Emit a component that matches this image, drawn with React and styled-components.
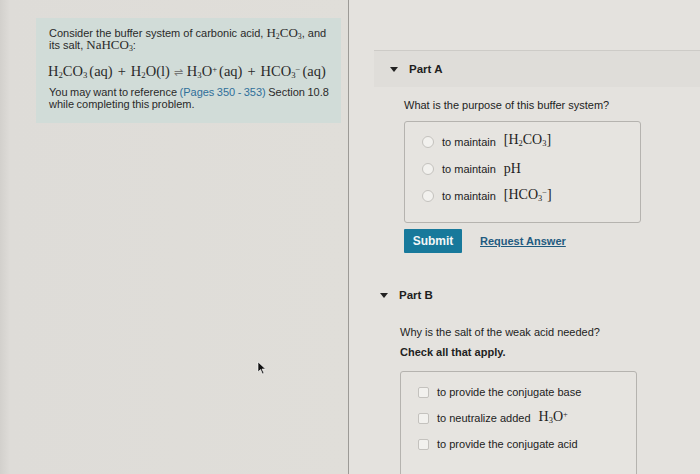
import React from "react";
import styled, { createGlobalStyle } from "styled-components";

const GlobalStyle = createGlobalStyle`
  html, body {
    margin: 0;
    padding: 0;
    width: 700px;
    height: 474px;
    overflow: hidden;
    background: #e1dfdb;
    font-family: "Liberation Sans", Arial, sans-serif;
    color: #2b2b2b;
  }
`;

const Page = styled.div`
  position: relative;
  display: flex;
  width: 700px;
  height: 474px;
`;

const LeftPane = styled.div`
  width: 349px;
  flex-shrink: 0;
  padding: 18px 0 0 36px;
  box-sizing: border-box;
  border-right: 1px solid #9c9a96;
  background: linear-gradient(90deg, #d2d0cc 0px, #dedcd8 10px, #e0ded9 100%);
`;

const InfoBox = styled.div`
  width: 305px;
  height: 105px;
  box-sizing: border-box;
  padding: 9px 4px 0 13px;
  background: #d1dcd8;
  font-size: 11px;
  line-height: 12px;
  color: #2a2a2a;
`;

const Para = styled.p`
  margin: 0 0 ${(p) => p.gap || 0}px 0;
  word-spacing: ${(p) => p.tight || 0}px;
`;

const Equation = styled.div`
  display: flex;
  align-items: baseline;
  font-family: "Liberation Serif", "Times New Roman", serif;
  font-size: 14.5px;
  line-height: 16px;
  margin: 0 0 6px -1px;
  white-space: nowrap;
`;

const Op = styled.span`
  margin: 0 ${(p) => p.space || 5}px;
  color: ${(p) => p.color || "inherit"};
  font-size: ${(p) => p.size || 14.5}px;
`;

const Math = styled.span`
  font-family: "Liberation Serif", "Times New Roman", serif;
  font-size: ${(p) => p.size || 13}px;
  line-height: 0;
`;

const Sub = styled.sub`
  font-size: 0.6em;
  line-height: 0;
  vertical-align: -0.25em;
`;

const Sup = styled.sup`
  font-size: 0.6em;
  line-height: 0;
  vertical-align: 0.5em;
`;

const Phase = styled.span`
  margin-left: 2px;
`;

const RefLink = styled.span`
  color: #2f6f9a;
`;

const RightPane = styled.div`
  flex: 1;
  padding-top: 50px;
  background: #e4e2de;
`;

const Section = styled.section`
  border-top: ${(p) => (p.divider ? "1px solid #cdcbc7" : "none")};
  margin-left: ${(p) => (p.divider ? 25 : 0)}px;
`;

const PartHeader = styled.div`
  display: flex;
  align-items: center;
  gap: 11px;
  height: 36px;
  padding-left: ${(p) => p.indent}px;
  font-size: 11.5px;
  font-weight: bold;
  color: #1e1e1e;
  background: ${(p) => (p.shaded ? "#dfddd9" : "transparent")};
`;

const Caret = styled.span`
  width: 0;
  height: 0;
  border-left: 4px solid transparent;
  border-right: 4px solid transparent;
  border-top: 5px solid #222;
`;

const Body = styled.div`
  padding-left: ${(p) => p.indent}px;
`;

const Question = styled.div`
  font-size: 11px;
  line-height: 12px;
  margin-top: ${(p) => p.top}px;
  font-weight: ${(p) => (p.bold ? "bold" : "normal")};
  color: #222;
`;

const OptionBox = styled.div`
  width: 237px;
  box-sizing: border-box;
  height: ${(p) => p.height}px;
  margin-top: ${(p) => p.top}px;
  padding: ${(p) => p.padTop}px 0 0 17px;
  border: 1px solid #b5b3af;
  border-radius: 3px;
  background: #e6e4e0;
  display: flex;
  flex-direction: column;
  gap: ${(p) => p.gap}px;
`;

const Option = styled.label`
  display: flex;
  align-items: center;
  gap: 8px;
  height: 16px;
  font-size: 11px;
  color: #222;
`;

const Radio = styled.span`
  width: 10px;
  height: 10px;
  border-radius: 50%;
  border: 1px solid #c4c2be;
  background: #f2f1ee;
  flex-shrink: 0;
`;

const Check = styled.span`
  width: 9px;
  height: 9px;
  border-radius: 2px;
  border: 1px solid #c4c2be;
  background: #f2f1ee;
  flex-shrink: 0;
`;

const Actions = styled.div`
  display: flex;
  align-items: center;
  gap: 18px;
  margin-top: 6px;
`;

const SubmitButton = styled.button`
  width: 58px;
  height: 24px;
  border: none;
  border-radius: 1px;
  background: #17799b;
  color: #f3f6f7;
  font-family: "Liberation Sans", Arial, sans-serif;
  font-size: 12px;
  font-weight: bold;
  padding: 0;
`;

const RequestLink = styled.a`
  font-size: 11px;
  font-weight: bold;
  color: #1f5b80;
  text-decoration: underline;
`;

const Cursor = styled.svg`
  position: absolute;
  left: 257px;
  top: 361px;
`;

const App = () => {
  return (
    <Page>
      <GlobalStyle />
      <LeftPane>
        <InfoBox>
          <Para gap={12}>
            Consider the buffer system of carbonic acid,{" "}
            <Math>
              H<Sub>2</Sub>CO<Sub>3</Sub>
            </Math>
            , and its salt,{" "}
            <Math>
              NaHCO<Sub>3</Sub>
            </Math>
            :
          </Para>
          <Equation>
            <span>
              H<Sub>2</Sub>CO<Sub>3</Sub>
              <Phase>(aq)</Phase>
            </span>
            <Op>+</Op>
            <span>
              H<Sub>2</Sub>O(l)
            </span>
            <Op space={4} color="#777" size={11}>
              ⇌
            </Op>
            <span>
              H<Sub>3</Sub>O<Sup>+</Sup>
              <Phase>(aq)</Phase>
            </span>
            <Op>+</Op>
            <span>
              HCO<Sub>3</Sub>
              <Sup>−</Sup>
              <Phase>(aq)</Phase>
            </span>
          </Equation>
          <Para tight={-0.6}>
            You may want to reference <RefLink>(Pages 350 - 353)</RefLink>{" "}
            Section 10.8 while completing this problem.
          </Para>
        </InfoBox>
      </LeftPane>

      <RightPane>
        <Section divider>
          <PartHeader indent={16} shaded>
            <Caret />
            Part A
          </PartHeader>
          <Body indent={30}>
            <Question top={12}>What is the purpose of this buffer system?</Question>
            <OptionBox top={10} height={102} padTop={12} gap={11}>
              <Option>
                <Radio />
                to maintain{" "}
                <Math size={14}>
                  [H<Sub>2</Sub>CO<Sub>3</Sub>]
                </Math>
              </Option>
              <Option>
                <Radio />
                to maintain <Math size={14}>pH</Math>
              </Option>
              <Option>
                <Radio />
                to maintain{" "}
                <Math size={14}>
                  [HCO<Sub>3</Sub>
                  <Sup>−</Sup>]
                </Math>
              </Option>
            </OptionBox>
            <Actions>
              <SubmitButton>Submit</SubmitButton>
              <RequestLink>Request Answer</RequestLink>
            </Actions>
          </Body>
        </Section>

        <Section>
          <PartHeader indent={31} style={{ marginTop: 24 }}>
            <Caret />
            Part B
          </PartHeader>
          <Body indent={51}>
            <Question top={13}>Why is the salt of the weak acid needed?</Question>
            <Question top={8} bold>
              Check all that apply.
            </Question>
            <OptionBox top={13} height={110} padTop={12} gap={10}>
              <Option>
                <Check />
                to provide the conjugate base
              </Option>
              <Option>
                <Check />
                to neutralize added{" "}
                <Math size={14}>
                  H<Sub>3</Sub>O<Sup>+</Sup>
                </Math>
              </Option>
              <Option>
                <Check />
                to provide the conjugate acid
              </Option>
            </OptionBox>
          </Body>
        </Section>
      </RightPane>

      <Cursor width="10" height="14" viewBox="0 0 10 14">
        <path d="M1 1 L1 11 L3.5 8.5 L5.5 13 L7 12.3 L5 8 L8.5 8 Z" fill="#111" stroke="#fff" strokeWidth="0.6" />
      </Cursor>
    </Page>
  );
};

export default App;
